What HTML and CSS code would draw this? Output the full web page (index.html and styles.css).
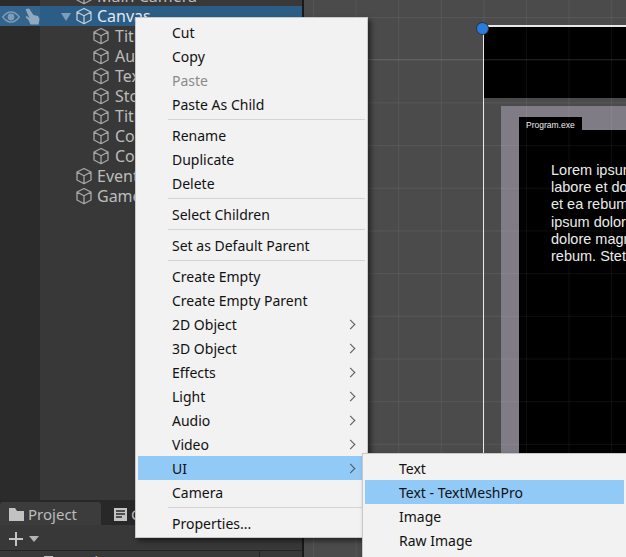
FILE: index.html
```html
<!DOCTYPE html>
<html lang="en">
<head>
<meta charset="utf-8">
<title>Unity Editor context menu</title>
<link rel="stylesheet" href="styles.css">
</head>
<body>
<svg class="defs" width="0" height="0" aria-hidden="true">
  <symbol id="cube" viewBox="0 0 18 18">
    <path d="M9 1.500 16 5v8l-7 3.700L2 13V5zM2 5l7 3.700L16 5M9 8.700v8" fill="none" stroke="currentColor" stroke-width="1.300" stroke-linejoin="round"/>
  </symbol>
</svg>
<div class="app">
  <div class="left">
    <div class="hierarchy">
      <div class="gutter"></div>
      <div class="tree">
        <div class="row depth1"><svg class="cube"><use href="#cube"/></svg><span>Main Camera</span></div>
        <div class="row selected depth1">
          <div class="sel-icons">
            <svg width="18" height="12" viewBox="0 0 18 12"><path d="M.7 6c2.700-3.500 5.300-5 8.300-5s5.600 1.500 8.300 5c-2.700 3.500-5.300 5-8.300 5S3.400 9.500.7 6z" fill="none" stroke="#7f9cb8" stroke-width="1.300"/><circle cx="9" cy="6" r="3.400" fill="#7f9cb8"/></svg>
            <svg width="15" height="18" viewBox="0 0 15 18"><path d="M1 1l3-.5 4.500 6.500 4.500 1 1.500 3-1 5.500H5.500L3.500 12 .5 9l1.200-1 2.800 2L.8 2z" fill="#8fa9c1"/></svg>
          </div>
          <svg class="arrow" width="12" height="10" viewBox="0 0 12 10"><path d="M1 1h10L6 9z" fill="#7f9cb8"/></svg>
          <svg class="cube"><use href="#cube"/></svg><span>Canvas</span>
        </div>
        <div class="row depth2"><svg class="cube"><use href="#cube"/></svg><span>Title</span></div>
        <div class="row depth2"><svg class="cube"><use href="#cube"/></svg><span>Author</span></div>
        <div class="row depth2"><svg class="cube"><use href="#cube"/></svg><span>Text</span></div>
        <div class="row depth2"><svg class="cube"><use href="#cube"/></svg><span>Story</span></div>
        <div class="row depth2"><svg class="cube"><use href="#cube"/></svg><span>Title</span></div>
        <div class="row depth2"><svg class="cube"><use href="#cube"/></svg><span>Cont</span></div>
        <div class="row depth2"><svg class="cube"><use href="#cube"/></svg><span>Cont</span></div>
        <div class="row depth1"><svg class="cube"><use href="#cube"/></svg><span>EventSystem</span></div>
        <div class="row depth1"><svg class="cube"><use href="#cube"/></svg><span>GameManager</span></div>
      </div>
    </div>
    <div class="bottom">
      <div class="tabs">
        <div class="tab active">
          <svg width="15" height="13" viewBox="0 0 15 13"><path d="M0 0h6l2 3h7v10H0z" fill="#c2c2c2"/></svg>
          <span>Project</span>
        </div>
        <div class="tab">
          <svg width="13" height="13" viewBox="0 0 13 13"><path d="M0 0h13v13H0z" fill="#c4c4c4"/><path d="M2 3h9M2 6h9M2 9h6" stroke="#282828" stroke-width="1.400"/></svg>
          <span>Console</span>
        </div>
      </div>
      <div class="tools">
        <svg width="16" height="16" viewBox="0 0 16 16"><path d="M8 1v14M1 8h14" stroke="#c4c4c4" stroke-width="2"/></svg>
        <svg width="10" height="6" viewBox="0 0 10 6"><path d="M0 0h10L5 6z" fill="#b4b4b4"/></svg>
      </div>
      <div class="favs">
        <div class="favs-tree"><span class="star">★</span><span class="fav-icon"></span><span>Favorites</span></div>
      </div>
    </div>
  </div>
  <div class="scene">
    <div class="grid-lines"></div>
    <div class="camera-frame">
      <div class="frame-black"></div>
      <div class="window">
        <div class="window-inner">
          <div class="window-title">Program.exe</div>
          <p class="lorem">Lorem ipsum dolor sit amet, consetetur sadipscing elitr, sed diam nonumy eirmod tempor invidunt ut<br>labore et dolore magna aliquyam erat, sed diam<br>et ea rebum. Stet clita kasd gubergren, no sea<br>ipsum dolor sit amet. Lorem ipsum dolor sit<br>dolore magna aliquyam erat, sed diam voluptua<br>rebum. Stet clita kasd gubergren, no sea</p>
        </div>
      </div>
    </div>
    <div class="handle"></div>
  </div>
</div>

<div class="menu main-menu">
  <div class="item">Cut</div>
  <div class="item">Copy</div>
  <div class="item disabled">Paste</div>
  <div class="item">Paste As Child</div>
  <div class="sep"></div>
  <div class="item">Rename</div>
  <div class="item">Duplicate</div>
  <div class="item">Delete</div>
  <div class="sep"></div>
  <div class="item">Select Children</div>
  <div class="sep"></div>
  <div class="item">Set as Default Parent</div>
  <div class="sep"></div>
  <div class="item">Create Empty</div>
  <div class="item">Create Empty Parent</div>
  <div class="item sub">2D Object</div>
  <div class="item sub">3D Object</div>
  <div class="item sub">Effects</div>
  <div class="item sub">Light</div>
  <div class="item sub">Audio</div>
  <div class="item sub">Video</div>
  <div class="item sub hot">UI</div>
  <div class="item">Camera</div>
  <div class="sep"></div>
  <div class="item">Properties...</div>
</div>
<div class="menu sub-menu">
  <div class="item">Text</div>
  <div class="item hot">Text - TextMeshPro</div>
  <div class="item">Image</div>
  <div class="item">Raw Image</div>
</div>
</body>
</html>
```
FILE: styles.css
```css
* { box-sizing: border-box; }
html, body { margin: 0; height: 100%; overflow: hidden; }
body { position: relative; width: 626px; height: 557px; background: #383838; font-family: "Noto Sans", sans-serif; }
.defs { position: absolute; }
.app { display: flex; height: 557px; }
.left { width: 304px; display: flex; flex-direction: column; border-right: 2px solid #191919; }
.hierarchy { height: 500px; display: flex; background: #383838; overflow: hidden; }
.gutter { width: 40px; background: #2b2b2b; flex: none; }
.tree { flex: 1; margin-left: -40px; margin-top: -14px; position: relative; z-index: 1; }
.row { height: 20px; display: flex; align-items: center; color: #bdbdbd; font-size: 16px; white-space: nowrap; }
.depth1 { padding-left: 75px; gap: 4px; }
.depth2 { padding-left: 92px; gap: 5px; }
.cube { width: 18px; height: 18px; color: #a8a8a8; flex: none; }
.row.selected { background: #2c5d87; position: relative; color: #e2e8ee; }
.row.selected .cube { color: #c4ccd4; }
.sel-icons { position: absolute; left: 0; top: 0; width: 40px; height: 20px; padding: 2px 0 0 2px; display: flex; align-items: center; gap: 5px; background: rgba(255,255,255,.04); }
.arrow { position: absolute; left: 60px; top: 6px; }
.bottom { flex: 1; background: #383838; display: flex; flex-direction: column; overflow: hidden; }
.tabs { height: 25px; display: flex; background: #282828; flex: none; padding-top: 2px; }
.tab { height: 23px; display: flex; align-items: center; gap: 4px; padding: 1px 12px 0 9px; color: #bcbcbc; font-size: 15px; }
.tab.active { background: #3c3c3c; width: 101px; border-radius: 3px 3px 0 0; }
.tab:not(.active) { padding-left: 13px; }
.tools { height: 26px; display: flex; align-items: center; gap: 5px; padding: 2px 0 0 8px; border-bottom: 1px solid #232323; flex: none; }
.favs { flex: 1; display: flex; }
.favs-tree { width: 260px; display: flex; align-items: flex-start; gap: 5px; font-size: 14px; line-height: 18px; color: #c4c4c4; padding: 2px 0 0 26px; border-right: 1px solid #232323; }
.star { color: #f2c230; }
.fav-icon { width: 9px; height: 10px; margin-top: 3px; background: #c0c0c0; flex: none; }
.scene { flex: 1; position: relative; background-color: #4b4b4b; overflow: hidden; }
.grid-lines { position: absolute; inset: 0; z-index: 3; pointer-events: none;
  background-image:
    linear-gradient(rgba(255,255,255,.1), rgba(255,255,255,.1)),
    linear-gradient(to right, rgba(255,255,255,.06) 1px, transparent 1px),
    linear-gradient(to bottom, rgba(255,255,255,.06) 1px, transparent 1px);
  background-size: 100% 1px, 42.600px 100%, 100% 42.700px;
  background-position: 0 59px, 9px 0, 0 17px;
  background-repeat: no-repeat, repeat, repeat; }
.camera-frame { position: absolute; left: 179px; top: 25px; width: 500px; height: 560px; border-left: 1px solid #e8e8e8; border-top: 2px solid #e8e8e8; }
.frame-black { height: 71px; background: #000; }
.window { margin: 8px 0 0 17px; background: #7f7c86; padding: 11px 0 0 18px; height: 500px; position: relative; }
.window-inner { background: #000; height: 490px; margin-top: 13px; position: relative; }
.window-title { position: absolute; top: -13px; left: 0; width: 63px; height: 13px; background: #000; color: #eee; font: 8.500px/17px "Liberation Sans", sans-serif; padding-left: 7px; }
.lorem { margin: 0; padding: 32px 0 0 32px; color: #ebebeb; font: 14.500px/17.200px "Liberation Sans", sans-serif; white-space: nowrap; }
.handle { position: absolute; left: 173px; top: 23px; width: 11px; height: 11px; border-radius: 50%; background: #2a7be0; box-shadow: 0 0 0 1px #333; z-index: 4; }
.menu { position: absolute; background: #f2f2f2; border: 1px solid #c8c8c8; box-shadow: 3px 3px 5px rgba(0,0,0,.5); padding: 2px; z-index: 10; font-size: 14px; color: #111; }
.main-menu { left: 135px; top: 17px; width: 233px; height: 521px; }
.sub-menu { left: 362px; top: 453px; width: 265px; height: 120px; }
.item { height: 24px; line-height: 26px; padding-left: 34px; position: relative; white-space: nowrap; }
.item.disabled { color: #8a8a8a; }
.item.hot { background: #91c9f7; }
.item.sub::after { content: ""; position: absolute; right: 11px; top: 9px; width: 6px; height: 6px; border-top: 1px solid #555; border-right: 1px solid #555; transform: rotate(45deg); }
.sep { height: 1px; background: #d4d4d4; margin: 3px 0 3px 30px; }
```
